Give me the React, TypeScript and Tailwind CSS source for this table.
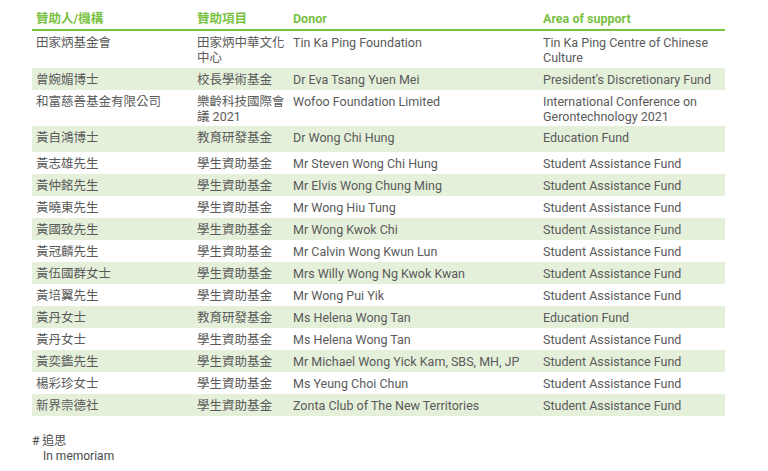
import React from "react";

type Row = { a: string; b: string; c: string; d: string; h: string; green: boolean };

const rows: Row[] = [
  { a: "田家炳基金會", b: "田家炳中華文化中心", c: "Tin Ka Ping Foundation", d: "Tin Ka Ping Centre of Chinese Culture", h: "h-[37px]", green: false },
  { a: "曾婉媚博士", b: "校長學術基金", c: "Dr Eva Tsang Yuen Mei", d: "President's Discretionary Fund", h: "h-[22px]", green: true },
  { a: "和富慈善基金有限公司", b: "樂齡科技國際會議 2021", c: "Wofoo Foundation Limited", d: "International Conference on Gerontechnology 2021", h: "h-[36px]", green: false },
  { a: "黃自鴻博士", b: "教育研發基金", c: "Dr Wong Chi Hung", d: "Education Fund", h: "h-[26px]", green: true },
  { a: "黃志雄先生", b: "學生資助基金", c: "Mr Steven Wong Chi Hung", d: "Student Assistance Fund", h: "h-[22px]", green: false },
  { a: "黃仲銘先生", b: "學生資助基金", c: "Mr Elvis Wong Chung Ming", d: "Student Assistance Fund", h: "h-[22px]", green: true },
  { a: "黃曉東先生", b: "學生資助基金", c: "Mr Wong Hiu Tung", d: "Student Assistance Fund", h: "h-[22px]", green: false },
  { a: "黃國致先生", b: "學生資助基金", c: "Mr Wong Kwok Chi", d: "Student Assistance Fund", h: "h-[22px]", green: true },
  { a: "黃冠麟先生", b: "學生資助基金", c: "Mr Calvin Wong Kwun Lun", d: "Student Assistance Fund", h: "h-[22px]", green: false },
  { a: "黃伍國群女士", b: "學生資助基金", c: "Mrs Willy Wong Ng Kwok Kwan", d: "Student Assistance Fund", h: "h-[22px]", green: true },
  { a: "黃培翼先生", b: "學生資助基金", c: "Mr Wong Pui Yik", d: "Student Assistance Fund", h: "h-[22px]", green: false },
  { a: "黃丹女士", b: "教育研發基金", c: "Ms Helena Wong Tan", d: "Education Fund", h: "h-[22px]", green: true },
  { a: "黃丹女士", b: "學生資助基金", c: "Ms Helena Wong Tan", d: "Student Assistance Fund", h: "h-[22px]", green: false },
  { a: "黃奕鑑先生", b: "學生資助基金", c: "Mr Michael Wong Yick Kam, SBS, MH, JP", d: "Student Assistance Fund", h: "h-[22px]", green: true },
  { a: "楊彩珍女士", b: "學生資助基金", c: "Ms Yeung Choi Chun", d: "Student Assistance Fund", h: "h-[22px]", green: false },
  { a: "新界崇德社", b: "學生資助基金", c: "Zonta Club of The New Territories", d: "Student Assistance Fund", h: "h-[22px]", green: true },
];

const font = { fontFamily: "Roboto, 'Noto Sans CJK TC', sans-serif" };

export default function App() {
  return (
    <div className="w-[768px] h-[471px] bg-white overflow-hidden" style={font}>
      <div className="pl-[32px] w-[725px]">
        <div className="grid grid-cols-[161px_96px_250px_186px] border-b-2 border-[#7ac143] text-[12.5px] leading-[15px] font-bold text-[#7ac143]">
          <div className="pl-[4px] pt-[11px] pb-[3px]">贊助人/機構</div>
          <div className="pl-[4px] pt-[11px] pb-[3px]">贊助項目</div>
          <div className="pl-[4px] pt-[11px] pb-[3px]">Donor</div>
          <div className="pl-[4px] pt-[11px] pb-[3px]">Area of support</div>
        </div>
        {rows.map((r, i) => (
          <div
            key={i}
            className={`grid grid-cols-[161px_96px_250px_186px] text-[12.5px] leading-[15px] text-[#5a5a5a] ${r.h} ${r.green ? "bg-[#e5f0db]" : "bg-white"}`}
          >
            <div className="pl-[4px] pr-[4px] pt-[4px]">{r.a}</div>
            <div className="pl-[4px] pr-[3px] pt-[4px]">{r.b}</div>
            <div className="pl-[4px] pr-[4px] pt-[4px]">{r.c}</div>
            <div className="pl-[4px] pr-[4px] pt-[4px]">{r.d}</div>
          </div>
        ))}
        <div className="mt-[18px] text-[12px] leading-[15px] text-[#4a4a4a]">
          <div># 追思</div>
          <div className="pl-[11px]">In memoriam</div>
        </div>
      </div>
    </div>
  );
}
